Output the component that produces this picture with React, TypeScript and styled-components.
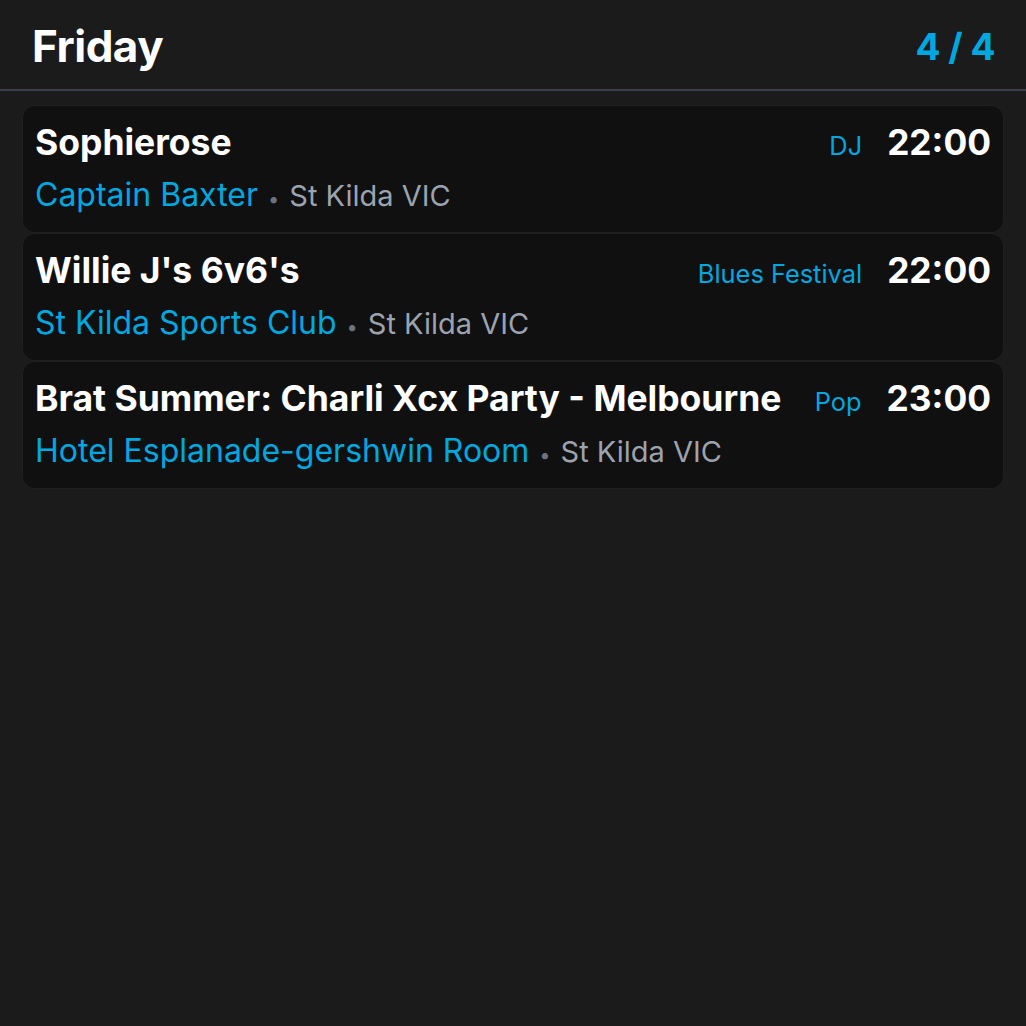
import React from "react";
import styled, { createGlobalStyle } from "styled-components";

const Global = createGlobalStyle`
  html, body { margin: 0; padding: 0; background: #1b1b1b; }
  body { font-family: Inter, "Noto Sans", sans-serif; color: #fff; }
  #root { min-height: 1026px; background: #1b1b1b; }
`;

const Page = styled.div`
  display: flex;
  flex-direction: column;
`;

const Header = styled.header`
  display: flex;
  align-items: center;
  justify-content: space-between;
  box-sizing: border-box;
  height: 91px;
  padding: 3px 31px 0 32px;
  border-bottom: 2px solid #3a3f4a;
`;

const Day = styled.h1`
  margin: 0;
  font-size: 44px;
  font-weight: 700;
  letter-spacing: -0.5px;
  color: #fff;
`;

const Count = styled.span`
  font-size: 37px;
  font-weight: 700;
  color: #00a8e0;
  letter-spacing: -0.5px;
`;

const List = styled.div`
  display: flex;
  flex-direction: column;
  gap: 2px;
  padding: 15px 23px;
`;

const Card = styled.div`
  display: flex;
  flex-direction: column;
  gap: 12px;
  height: 126px;
  box-sizing: border-box;
  padding: 17px 12px;
  background: #101010;
  border-radius: 12px;
  box-shadow: 0 0 0 1px rgba(255, 255, 255, 0.02);
`;

const TopRow = styled.div`
  display: flex;
  align-items: baseline;
  gap: 25px;
  line-height: 40px;
  min-height: 40px;
`;

const Title = styled.div`
  flex: 1;
  min-width: 0;
  font-size: 35.5px;
  font-weight: 700;
  color: #fff;
  white-space: nowrap;
`;

const Genre = styled.span`
  font-size: 25.4px;
  color: #00a8e0;
  white-space: nowrap;
`;

const Time = styled.span`
  font-size: 35.3px;
  font-weight: 700;
  color: #fff;
`;

const Bottom = styled.div`
  display: flex;
  align-items: baseline;
  gap: 10px;
  line-height: 40px;
  min-height: 40px;
`;

const Venue = styled.span`
  font-size: 32px;
  color: #00a8e0;
`;

const Dot = styled.span`
  font-size: 20px;
  color: #6b7280;
`;

const Place = styled.span`
  font-size: 29px;
  color: #9ca3af;
`;

const events = [
  { title: "Sophierose", genre: "DJ", time: "22:00", venue: "Captain Baxter", place: "St Kilda VIC" },
  { title: "Willie J's 6v6's", genre: "Blues Festival", time: "22:00", venue: "St Kilda Sports Club", place: "St Kilda VIC" },
  { title: "Brat Summer: Charli Xcx Party - Melbourne", genre: "Pop", time: "23:00", venue: "Hotel Esplanade-gershwin Room", place: "St Kilda VIC" },
];

export default function App() {
  return (
    <Page>
      <Global />
      <Header>
        <Day>Friday</Day>
        <Count>4 / 4</Count>
      </Header>
      <List>
        {events.map((e) => (
          <Card key={e.title}>
            <TopRow>
              <Title>{e.title}</Title>
              <Genre>{e.genre}</Genre>
              <Time>{e.time}</Time>
            </TopRow>
            <Bottom>
              <Venue>{e.venue}</Venue>
              <Dot>•</Dot>
              <Place>{e.place}</Place>
            </Bottom>
          </Card>
        ))}
      </List>
    </Page>
  );
}
